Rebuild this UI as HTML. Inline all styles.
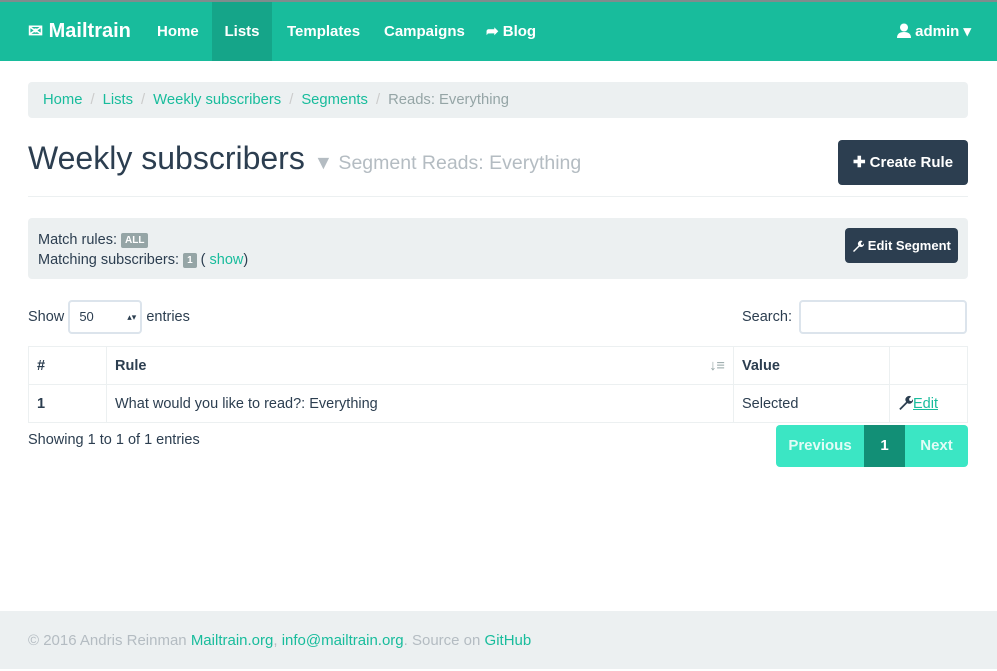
<!DOCTYPE html>
<html><head><meta charset="utf-8"><style>
*{box-sizing:border-box;margin:0;padding:0}
body{width:997px;height:669px;font-family:"Liberation Sans",sans-serif;font-size:14px;color:#2c3e50;background:#fff;position:relative;overflow:hidden}
a{color:#18bc9c;text-decoration:none}
.nav{position:absolute;top:0;left:0;width:997px;height:61px;background:#18bc9c;border-top:2px solid #7f8c8d}
.nav a{position:absolute;top:0;height:59px;line-height:59px;color:#fff;font-weight:bold;font-size:15px}
.bc{position:absolute;left:28px;top:82px;width:940px;height:36px;background:#ecf0f1;border-radius:4px;padding-left:15px;line-height:36px;font-size:14.8px}
.bc .s{color:#ccc;margin:0 8px}
.muted{color:#95a5a6}
h1{position:absolute;left:28px;top:140px;font-size:32px;font-weight:normal;white-space:nowrap}
h1 small{font-size:19.5px;color:#b4bcc2}
.btn{position:absolute;background:#2c3e50;color:#fff;font-weight:bold;border-radius:4px;text-align:center}
hr{position:absolute;left:28px;top:196px;width:940px;border:0;border-top:1px solid #ecf0f1}
.well{position:absolute;left:28px;top:218px;width:940px;height:61px;background:#ecf0f1;border-radius:4px;padding:12px 10px;line-height:20px;font-size:14.5px}
.lbl{display:inline-block;background:#95a5a6;color:#fff;font-size:10px;font-weight:bold;padding:1px 4px;border-radius:2px;line-height:13px;vertical-align:1px}
table{position:absolute;left:28px;top:346px;width:940px;border-collapse:collapse}
td,th{border:1px solid #ecf0f1;height:38px;padding:0 8px;text-align:left;font-size:14.5px}
.pg{position:absolute;top:425px;height:42px;line-height:42px;color:rgba(255,255,255,.85);font-weight:bold;font-size:15px;text-align:center}
.foot{position:absolute;left:0;top:611px;width:997px;height:58px;background:#ecf0f1;color:#b4bcc2;line-height:60px;padding-left:28px;font-size:15px}
svg{vertical-align:-2px}
</style></head><body>
<div class="nav">
<a style="left:28px;font-size:20px;"><span style="font-size:18px">✉</span> Mailtrain</a>
<a style="left:157px">Home</a>
<a style="left:212px;width:60px;background:#15a589;text-align:center">Lists</a>
<a style="left:287px">Templates</a>
<a style="left:384px">Campaigns</a>
<a style="left:486px">➦ Blog</a>
<a style="left:897px"><svg width="14" height="15" viewBox="0 0 14 15"><circle cx="7" cy="4.5" r="4" fill="#fff"/><path d="M0 15 Q0 9 7 9 Q14 9 14 15Z" fill="#fff"/></svg> admin ▾</a>
</div>
<div class="bc"><a>Home</a><span class="s">/</span><a>Lists</a><span class="s">/</span><a>Weekly subscribers</a><span class="s">/</span><a>Segments</a><span class="s">/</span><span class="muted">Reads: Everything</span></div>
<h1>Weekly subscribers <small>▼ Segment Reads: Everything</small></h1>
<div class="btn" style="left:838px;top:140px;width:130px;height:45px;line-height:45px;font-size:15px">✚ Create Rule</div>
<hr>
<div class="well">Match rules: <span class="lbl">ALL</span><br>Matching subscribers: <span class="lbl">1</span> ( <a>show</a>)</div>
<div class="btn" style="left:845px;top:228px;width:113px;height:35px;line-height:35px;font-size:13px"><svg width="12" height="12" viewBox="0 0 12 12"><path d="M1 11 L6.5 5.5 A3 3 0 0 1 10.5 1.2 L8.8 3 L9.2 4.6 L10.8 5 L12 3.3 A3 3 0 0 1 7.5 6.5 L2 12Z" fill="#fff"/></svg> Edit Segment</div>
<div style="position:absolute;left:28px;top:300px;line-height:33px;font-size:14.5px">Show <span style="display:inline-block;width:74px;height:34px;border:2px solid #dce4ec;border-radius:4px;vertical-align:middle;line-height:30px;padding-left:9px;font-size:13px">50<span style="float:right;margin-right:4px;font-size:9px">▴▾</span></span> entries</div>
<div style="position:absolute;left:742px;top:300px;line-height:33px;font-size:14.5px">Search: <span style="display:inline-block;width:168px;height:34px;border:2px solid #dce4ec;border-radius:4px;vertical-align:middle;margin-left:3px"></span></div>
<table>
<tr><th style="width:78px">#</th><th style="width:627px">Rule<span style="float:right;color:#95a5a6">↓≡</span></th><th style="width:156px">Value</th><th></th></tr>
<tr><td style="font-weight:bold">1</td><td>What would you like to read?: Everything</td><td>Selected</td><td><svg width="15" height="15" viewBox="0 0 12 12"><path d="M1 11 L6.5 5.5 A3 3 0 0 1 10.5 1.2 L8.8 3 L9.2 4.6 L10.8 5 L12 3.3 A3 3 0 0 1 7.5 6.5 L2 12Z" fill="#2c3e50"/></svg><a style="text-decoration:underline">Edit</a></td></tr>
</table>
<div style="position:absolute;left:28px;top:432px;font-size:14.5px">Showing 1 to 1 of 1 entries</div>
<div class="pg" style="left:776px;width:88px;background:#3be6c4;border-radius:4px 0 0 4px">Previous</div>
<div class="pg" style="left:864px;width:41px;background:#128f76;color:#fff">1</div>
<div class="pg" style="left:905px;width:63px;background:#3be6c4;border-radius:0 4px 4px 0">Next</div>
<div class="foot">© 2016 Andris Reinman <a>Mailtrain.org</a>, <a>info@mailtrain.org</a>. Source on <a>GitHub</a></div>
</body></html>
